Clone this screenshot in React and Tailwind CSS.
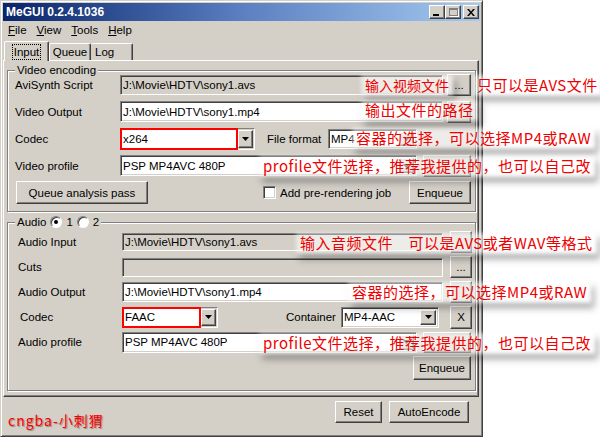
import React from 'react';

const SUNKEN =
  'border border-t-[#808080] border-l-[#808080] border-r-white border-b-white shadow-[inset_1px_1px_0_#404040,inset_-1px_-1px_0_#d4d0c8]';
const RAISED =
  'border border-t-white border-l-white border-r-[#404040] border-b-[#404040] shadow-[inset_-1px_-1px_0_#808080] bg-[#d4d0c8]';

function Btn({ className = '', children }) {
  return (
    <div className={`${RAISED} flex items-center justify-center shrink-0 ${className}`}>
      {children}
    </div>
  );
}

function Field({ className = '', value, disabled }) {
  return (
    <div
      className={`${SUNKEN} ${disabled ? 'bg-[#d4d0c8]' : 'bg-white'} flex items-center pl-[2px] shrink-0 whitespace-nowrap overflow-hidden ${className}`}
    >
      {value}
    </div>
  );
}

function Arrow() {
  return (
    <svg width="7" height="4" viewBox="0 0 7 4">
      <path d="M0 0h7L3.5 4z" fill="#000" />
    </svg>
  );
}

function Combo({ className = '', value, red }) {
  if (red) {
    return (
      <div className={`flex shrink-0 ${className}`}>
        <div className="flex-1 border-2 border-[#ff0000] bg-white flex items-center pl-[1px]">{value}</div>
        <div className="flex border border-l-0 border-t-[#808080] border-r-white border-b-white py-[1px] pr-[1px]">
          <Btn className="w-[15px] h-full">
            <Arrow />
          </Btn>
        </div>
      </div>
    );
  }
  return (
    <div className={`${SUNKEN} bg-white flex items-center p-[2px] pl-[2px] shrink-0 ${className}`}>
      <span className="flex-1 whitespace-nowrap overflow-hidden">{value}</span>
      <Btn className="w-[16px] h-full">
        <Arrow />
      </Btn>
    </div>
  );
}

function Radio({ checked }) {
  return (
    <div className="w-[12px] h-[12px] rounded-full border border-t-[#808080] border-l-[#808080] border-r-white border-b-white bg-white flex items-center justify-center shadow-[inset_1px_1px_0_#404040]">
      {checked && <div className="w-[4px] h-[4px] rounded-full bg-black" />}
    </div>
  );
}

// red hand-written note pasted over the screenshot
function Note({ className, size = 'text-[15px] tracking-[0.5px]', children }) {
  return (
    <div className={`absolute ${className}`}>
      <div className="absolute inset-[0px_-4px_-1px_-4px] bg-white/60 blur-[2px] shadow-[3px_5px_6px_rgba(0,0,0,0.35)]" />
      <span className={`relative whitespace-nowrap leading-[20px] text-[#ee0000] font-['Noto_Sans_CJK_SC',sans-serif] ${size}`}>
        {children}
      </span>
    </div>
  );
}

const path = (f) => `J:\\Movie\\HDTV\\${f}`;

export default function App() {
  return (
    <div className="relative w-[600px] h-[437px] bg-white overflow-hidden text-[11.5px] leading-[14px] text-black font-['Liberation_Sans',Arial,sans-serif]">
      {/* Window */}
      <div className="w-[483px] h-[437px] bg-[#d4d0c8] border border-t-[#d4d0c8] border-l-[#d4d0c8] border-r-[#404040] border-b-[#404040] shadow-[inset_1px_1px_0_#fff,inset_-1px_-1px_0_#808080] p-[2px] flex flex-col">
        {/* Title bar */}
        <div className="h-[18px] bg-linear-to-r from-[#0a246a] via-[#5b7fc0] to-[#a6caf0] flex items-center pl-[3px] pr-[1px]">
          <span className="text-white font-bold text-[12px]">MeGUI 0.2.4.1036</span>
          <div className="ml-auto flex items-center">
            <Btn className="w-[16px] h-[14px] items-end justify-start pl-[3px] pb-[2px]">
              <div className="w-[6px] h-[2px] bg-black" />
            </Btn>
            <Btn className="w-[16px] h-[14px]">
              <div className="w-[9px] h-[8px] border border-t-2 border-[#808080] shadow-[1px_1px_0_#fff]" />
            </Btn>
            <Btn className="w-[16px] h-[14px] ml-[2px]">
              <svg width="8" height="7" viewBox="0 0 8 7">
                <path d="M0 0h2l2 2.5L6 0h2L5 3.5 8 7H6L4 4.5 2 7H0l3-3.5z" fill="#000" />
              </svg>
            </Btn>
          </div>
        </div>

        {/* Menu bar */}
        <div className="h-[18px] flex items-center pl-[5px] gap-[10px]">
          {['File', 'View', 'Tools', 'Help'].map((m) => (
            <span key={m}>
              <span className="underline">{m[0]}</span>
              {m.slice(1)}
            </span>
          ))}
        </div>

        {/* Tabs */}
        <div className="h-[19px] mt-[2px] flex items-end pl-[1px]">
          <div className="relative z-10 w-[45px] h-[20px] -mb-[1px] bg-[#d4d0c8] border-t border-l border-r border-t-white border-l-white border-r-[#404040] shadow-[inset_-1px_0_0_#808080] rounded-t-[2px] flex items-start justify-center pt-[2px]">
            <span className="border border-dotted border-black px-[1px]">Input</span>
          </div>
          <div className="w-[42px] h-[17px] border-t border-l border-r border-t-white border-l-white border-r-[#404040] shadow-[inset_-1px_0_0_#808080] rounded-t-[2px] flex items-center justify-center">
            Queue
          </div>
          <div className="w-[42px] h-[17px] border-t border-r border-t-white border-r-[#404040] shadow-[inset_-1px_0_0_#808080] rounded-t-[2px] flex items-center pl-[4px]">
            Log
          </div>
        </div>

        {/* Tab panel */}
        <div className="w-[476px] h-[337px] border border-t-white border-l-white border-r-[#404040] border-b-[#404040] shadow-[inset_-1px_-1px_0_#808080] pl-[3px] pr-[2px] pt-[2px] flex flex-col">
          {/* Video encoding */}
          <fieldset className="w-[469px] border border-[#808080] shadow-[inset_1px_1px_0_#fff,1px_1px_0_#fff]">
            <legend className="ml-[7px] px-[2px] leading-[14px] bg-[#d4d0c8]">Video encoding</legend>
            <div className="flex flex-col gap-[4px] -mt-[4px] pb-[7px]">
              <div className="h-[23px] flex items-center">
                <div className="w-[112px] pl-[7px] shrink-0">AviSynth Script</div>
                <Field className="w-[323px] h-[20px]" value={path('sony1.avs')} disabled />
                <Btn className="ml-[4px] w-[24px] h-[22px]">...</Btn>
              </div>
              <div className="h-[23px] flex items-center">
                <div className="w-[112px] pl-[7px] shrink-0">Video Output</div>
                <Field className="w-[323px] h-[21px]" value={path('sony1.mp4')} />
                <Btn className="ml-[4px] w-[24px] h-[22px]" />
              </div>
              <div className="h-[23px] flex items-center">
                <div className="w-[112px] pl-[7px] shrink-0">Codec</div>
                <Combo className="w-[135px] h-[22px]" value="x264" red />
                <div className="ml-[12px] w-[61px] shrink-0">File format</div>
                <Combo className="w-[89px] h-[20px]" value="MP4" />
              </div>
              <div className="h-[23px] flex items-center">
                <div className="w-[112px] pl-[7px] shrink-0">Video profile</div>
                <Combo className="w-[297px] h-[21px]" value="PSP MP4AVC 480P" />
                <Btn className="ml-[6px] w-[48px] h-[22px]" />
              </div>
              <div className="h-[23px] flex items-center">
                <Btn className="ml-[8px] w-[132px] h-[23px]">Queue analysis pass</Btn>
                <div className={`ml-[115px] w-[13px] h-[13px] bg-white shrink-0 ${SUNKEN}`} />
                <span className="ml-[4px]">Add pre-rendering job</span>
                <Btn className="ml-auto mr-[4px] w-[62px] h-[23px]">Enqueue</Btn>
              </div>
            </div>
          </fieldset>

          {/* Audio */}
          <fieldset className="mt-[3px] w-[469px] border border-[#808080] shadow-[inset_1px_1px_0_#fff,1px_1px_0_#fff]">
            <legend className="ml-[7px] px-[2px] leading-[14px] bg-[#d4d0c8]">
              <div className="flex items-center">
                <span>Audio</span>
                <span className="ml-[4px]"><Radio checked /></span>
                <span className="ml-[4px]">1</span>
                <span className="ml-[4px]"><Radio /></span>
                <span className="ml-[4px]">2</span>
              </div>
            </legend>
            <div className="flex flex-col gap-[3px] mt-[2px] pb-[10px]">
              <div className="h-[22px] flex items-center">
                <div className="w-[114px] pl-[10px] shrink-0">Audio Input</div>
                <Field className="w-[321px] h-[18px]" value={path('sony1.avs')} disabled />
                <Btn className="ml-[7px] w-[22px] h-[22px]" />
              </div>
              <div className="h-[22px] flex items-center">
                <div className="w-[114px] pl-[10px] shrink-0">Cuts</div>
                <Field className="w-[321px] h-[19px]" value="" disabled />
                <Btn className="ml-[7px] w-[22px] h-[22px]">...</Btn>
              </div>
              <div className="h-[22px] flex items-center">
                <div className="w-[114px] pl-[10px] shrink-0">Audio Output</div>
                <Field className="w-[321px] h-[20px]" value={path('sony1.mp4')} />
                <Btn className="ml-[7px] w-[22px] h-[22px]" />
              </div>
              <div className="h-[22px] flex items-center">
                <div className="w-[114px] pl-[12px] shrink-0">Codec</div>
                <Combo className="w-[96px] h-[21px]" value="FAAC" red />
                <div className="ml-[68px] w-[55px] shrink-0">Container</div>
                <Combo className="w-[98px] h-[21px]" value="MP4-AAC" />
                <Btn className="ml-[11px] w-[22px] h-[23px]">X</Btn>
              </div>
              <div className="h-[22px] flex items-center">
                <div className="w-[114px] pl-[10px] shrink-0">Audio profile</div>
                <Combo className="w-[295px] h-[21px]" value="PSP MP4AVC 480P" />
                <Btn className="ml-[6px] w-[48px] h-[21px]" />
              </div>
              <div className="h-[24px] flex items-center">
                <Btn className="ml-auto mr-[4px] w-[58px] h-[24px]">Enqueue</Btn>
              </div>
            </div>
          </fieldset>
        </div>

        {/* Bottom buttons */}
        <div className="mt-[4px] flex justify-end pr-[11px] gap-[7px]">
          <Btn className="w-[47px] h-[22px]">Reset</Btn>
          <Btn className="w-[80px] h-[22px]">AutoEncode</Btn>
        </div>
      </div>

      {/* Annotations */}
      <Note className="left-[365px] top-[75px]" size="text-[14px] tracking-[0px]">输入视频文件</Note>
      <Note className="left-[477px] top-[75px]">只可以是AVS文件</Note>
      <Note className="left-[365px] top-[100px]">输出文件的路径</Note>
      <Note className="left-[356px] top-[128px]">容器的选择，可以选择MP4或RAW</Note>
      <Note className="left-[263px] top-[156px]">profile文件选择，推荐我提供的，也可以自己改</Note>
      <Note className="left-[300px] top-[233px]">输入音频文件　可以是AVS或者WAV等格式</Note>
      <Note className="left-[352px] top-[282px]">容器的选择，可以选择MP4或RAW</Note>
      <Note className="left-[263px] top-[333px]">profile文件选择，推荐我提供的，也可以自己改</Note>

      <div className="absolute left-[8px] top-[410px] text-[14px] leading-[20px] tracking-[1px] text-[#ff0000] font-['Noto_Sans_CJK_SC',sans-serif] [text-shadow:1px_1px_1px_rgba(0,0,0,0.35)]">
        cngba-小刺猬
      </div>
    </div>
  );
}
